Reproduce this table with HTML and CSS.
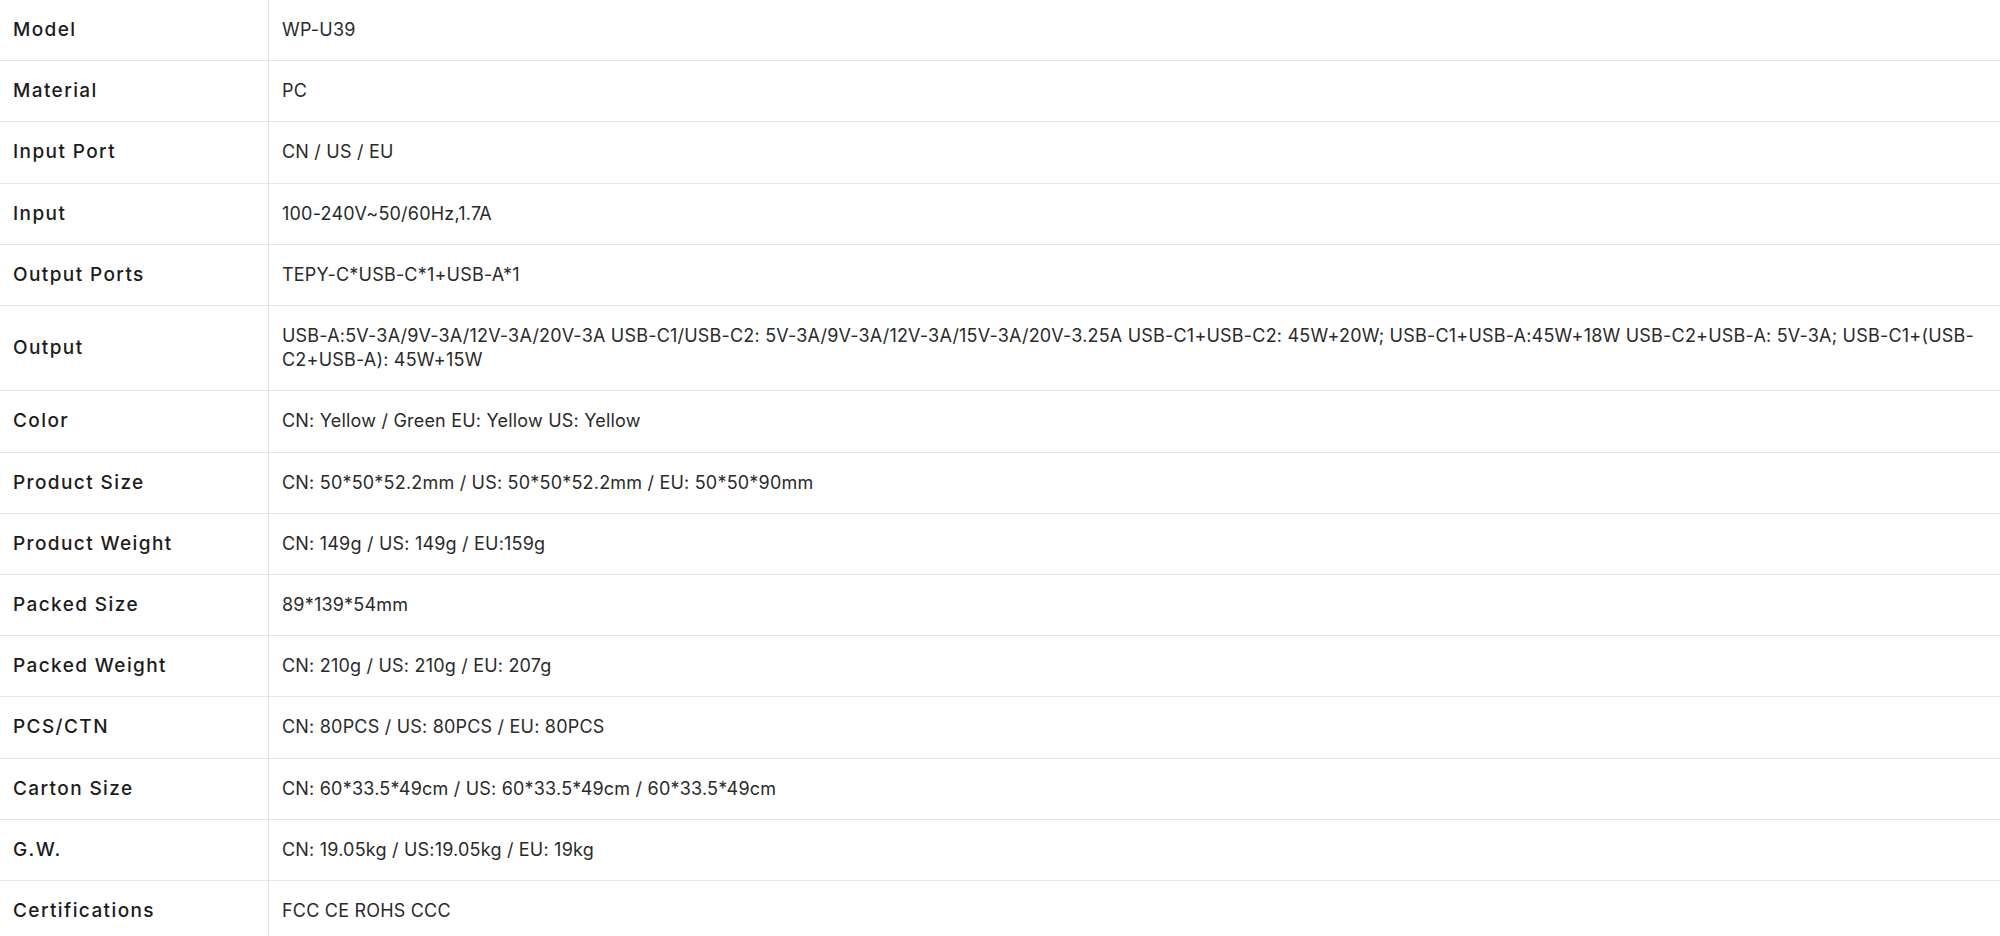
FILE: index.html
```html
<!DOCTYPE html>
<html lang="en">
<head>
    <meta charset="UTF-8">
    <meta name="viewport" content="width=device-width, initial-scale=1.0">
    <title>WP-U39 Specifications</title>
    <link rel="stylesheet" href="styles.css">
</head>
<body>
    <table class="spec-table">
        <tbody>
            <tr><th>Model</th><td>WP-U39</td></tr>
            <tr><th>Material</th><td>PC</td></tr>
            <tr><th>Input Port</th><td>CN / US / EU</td></tr>
            <tr><th>Input</th><td>100-240V~50/60Hz,1.7A</td></tr>
            <tr><th>Output Ports</th><td>TEPY-C*USB-C*1+USB-A*1</td></tr>
            <tr><th>Output</th><td>USB-A:5V-3A/9V-3A/12V-3A/20V-3A USB-C1/USB-C2: 5V-3A/9V-3A/12V-3A/15V-3A/20V-3.25A USB-C1+USB-C2: 45W+20W; USB-C1+USB-A:45W+18W USB-C2+USB-A: 5V-3A; USB-C1+(USB-C2+USB-A): 45W+15W</td></tr>
            <tr><th>Color</th><td>CN: Yellow / Green EU: Yellow US: Yellow</td></tr>
            <tr><th>Product Size</th><td>CN: 50*50*52.2mm / US: 50*50*52.2mm / EU: 50*50*90mm</td></tr>
            <tr><th>Product Weight</th><td>CN: 149g / US: 149g / EU:159g</td></tr>
            <tr><th>Packed Size</th><td>89*139*54mm</td></tr>
            <tr><th>Packed Weight</th><td>CN: 210g / US: 210g / EU: 207g</td></tr>
            <tr><th>PCS/CTN</th><td>CN: 80PCS / US: 80PCS / EU: 80PCS</td></tr>
            <tr><th>Carton Size</th><td>CN: 60*33.5*49cm / US: 60*33.5*49cm / 60*33.5*49cm</td></tr>
            <tr><th>G.W.</th><td>CN: 19.05kg / US:19.05kg / EU: 19kg</td></tr>
            <tr><th>Certifications</th><td>FCC CE ROHS CCC</td></tr>
        </tbody>
    </table>
</body>
</html>
```

FILE: styles.css
```css
body { margin: 0; background: #fff; font-family: Inter, "Open Sans", sans-serif; }
.spec-table { width: 100%; border-collapse: collapse; table-layout: fixed; }
.spec-table tr { border-bottom: 1px solid #e6e6e6; }
.spec-table th, .spec-table td { padding: 18px 13px; line-height: 24.2px; text-align: left; vertical-align: middle; }
.spec-table th { width: 242px; font-size: 19px; font-weight: 500; letter-spacing: 1.4px; color: #1c1c1c; border-right: 1px solid #e2e2e2; }
.spec-table td { font-size: 18px; font-weight: 400; color: #2a2a2a; letter-spacing: 0.2px; }
```
